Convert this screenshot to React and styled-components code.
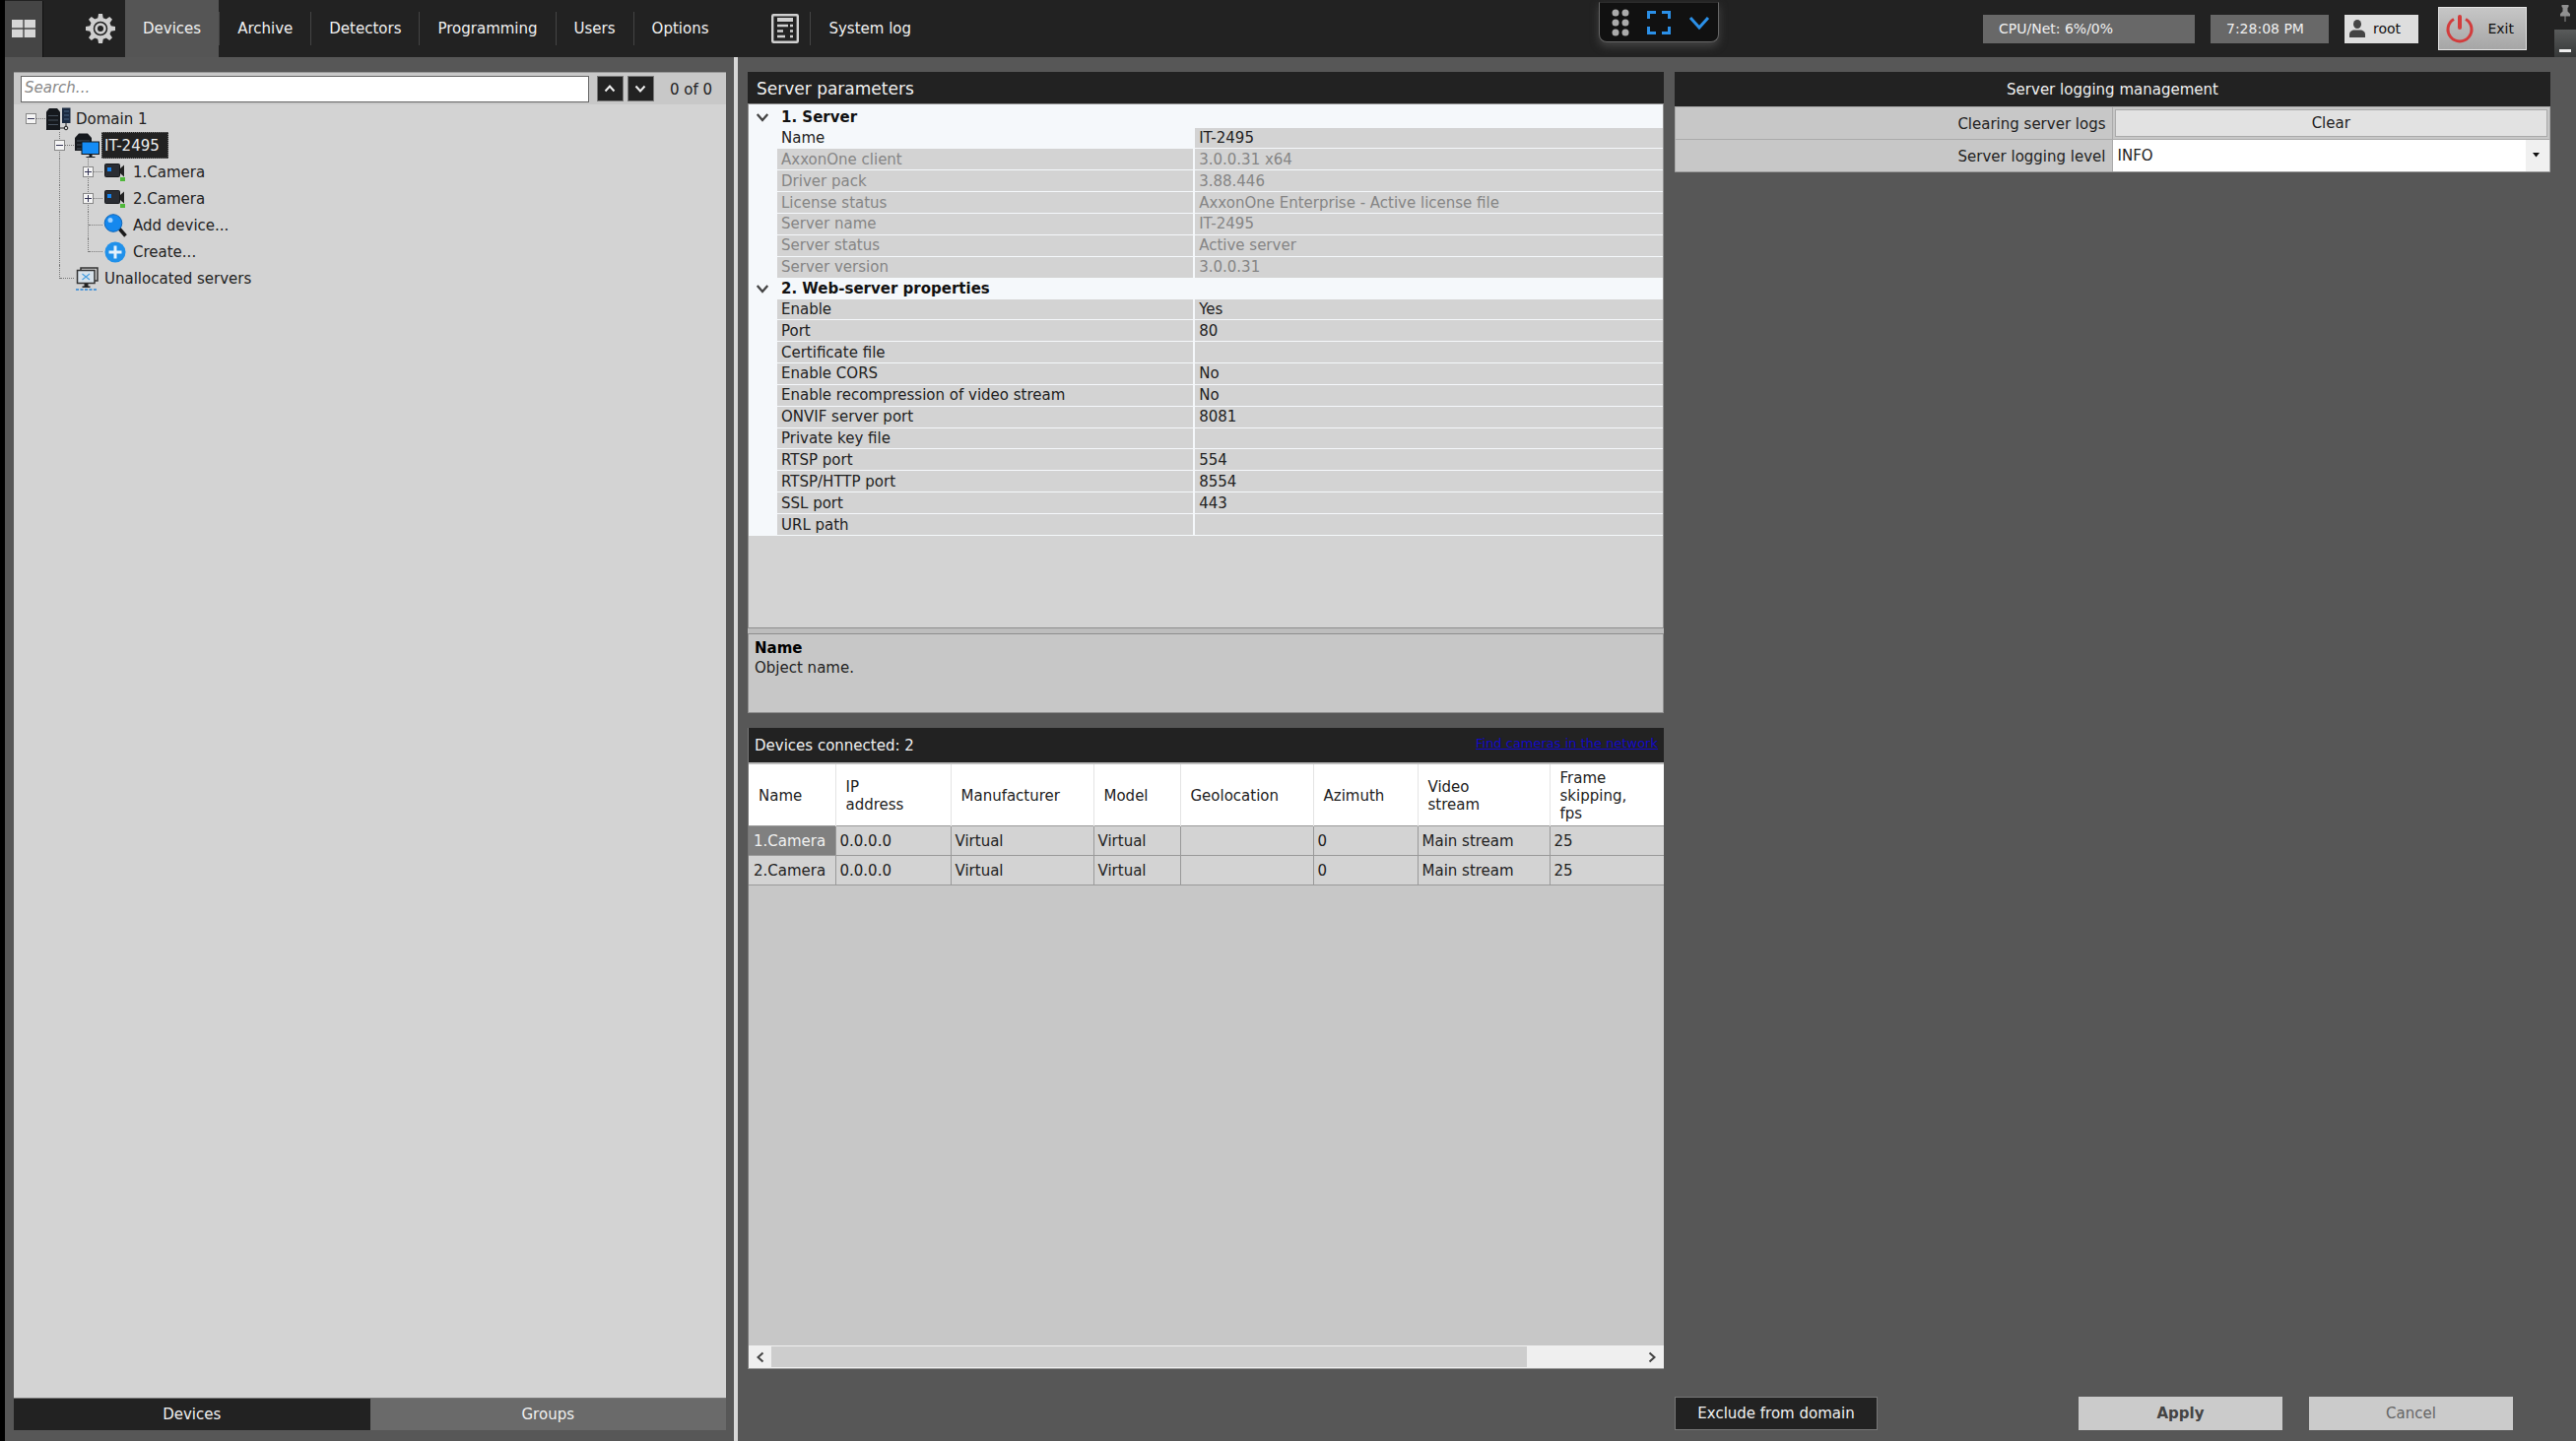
// dependences
import { useState } from 'react';

// styles
import styled, { createGlobalStyle, css } from 'styled-components';

const GlobalStyle = createGlobalStyle`
    *, *::before, *::after {
        box-sizing: border-box;
    }

    body {
        margin: 0;
        background: #575757;
        color: #222;
        font: 15px/18px "DejaVu Sans", Verdana, sans-serif;
    }

    button, input, select {
        margin: 0;
        padding: 0;
        border: 0;
        border-radius: 0;
        color: inherit;
        font: inherit;
    }
`;

const Page = styled.div`
    display: flex;
    flex-direction: column;
    min-height: 100vh;
    border-left: 5px solid #000;
`;

/* ---------- top bar ---------- */

const TopBar = styled.header`
    position: relative;
    display: flex;
    align-items: center;
    height: 58px;
    background: #222;
    color: #f0f0f0;
`;
const HomeButton = styled.button`
    display: flex;
    align-items: center;
    justify-content: center;
    width: 39px;
    height: 57px;
    margin-right: 43px;
    background: #454545;
    border-right: 1px solid #111;
`;
const Nav = styled.nav`
    display: flex;
    align-items: center;
    height: 100%;
    margin-left: 10px;
`;
const NavButton = styled.button`
    height: 58px;
    padding: 0 18px;
    background: ${({ $active }) => ($active ? '#555' : 'none')};
`;
const NavLine = styled.span`
    width: 1px;
    height: 34px;
    background: #444;
`;
const LogGroup = styled.div`
    display: flex;
    align-items: center;
    gap: 11px;
    margin-left: 46px;
`;
const Dock = styled.div`
    position: absolute;
    top: 2px;
    left: 62%;
    display: flex;
    align-items: center;
    justify-content: space-between;
    width: 122px;
    height: 41px;
    padding: 0 7px 0 12px;
    background: #111;
    border: 1px solid #666;
    border-top-color: #2c2c2c;
    border-radius: 0 0 8px 8px;
    box-shadow: 0 4px 8px #444;
`;
const DockButton = styled.button`
    display: flex;
    background: none;
`;
const Status = styled.div`
    display: flex;
    align-items: center;
    height: 100%;
    margin-left: auto;
    gap: 16px;
    font-size: 14px;
`;
const StatusBox = styled.span`
    width: ${({ $wide }) => ($wide ? '215px' : '120px')};
    height: 29px;
    padding: 5px 16px;
    background: #686868;
    white-space: nowrap;
`;
const UserButton = styled.button`
    display: flex;
    align-items: center;
    gap: 8px;
    width: 75px;
    height: 29px;
    padding: 0 5px;
    background: #dedede;
    color: #111;
`;
const ExitButton = styled.button`
    display: flex;
    align-items: center;
    justify-content: space-between;
    width: 90px;
    height: 44px;
    margin-left: 4px;
    padding: 0 12px 0 6px;
    background: linear-gradient(#c6c6c6, #a6a6a6);
    border: 1px solid #e4e4e4;
    color: #111;
`;
const WindowTools = styled.div`
    display: flex;
    flex-direction: column;
    justify-content: space-between;
    align-items: flex-end;
    width: 34px;
    height: 100%;
`;
const PinButton = styled.button`
    display: flex;
    justify-content: center;
    width: 22px;
    padding-top: 5px;
    background: none;
`;
const MinimizeButton = styled.button`
    display: flex;
    align-items: flex-end;
    justify-content: center;
    width: 22px;
    height: 28px;
    padding-bottom: 5px;
    background: linear-gradient(#595b5b, #363838);
`;

/* ---------- body ---------- */

const Body = styled.div`
    flex: 1;
    display: grid;
    grid-template-columns: 740fr 4px 1866fr;
`;
const Side = styled.aside`
    display: flex;
    flex-direction: column;
    padding: 15px 8px 11px 9px;
`;
const Splitter = styled.div`
    background: #d8d8d8;
`;
const Main = styled.main`
    display: grid;
    grid-template-columns: 930fr 889fr;
    column-gap: 11px;
    padding: 15px 26px 11px 10px;
`;

/* ---------- tree ---------- */

const SearchRow = styled.form`
    display: flex;
    align-items: center;
    gap: 4px;
    height: 33px;
    padding: 0 14px 0 7px;
    background: #c8c8c8;
    border-top: 1px solid #999;
`;
const SearchInput = styled.input`
    flex: 1;
    height: 27px;
    margin-right: 4px;
    padding: 0 3px 3px;
    background: #fff;
    border: 1px solid #666;

    &::placeholder {
        color: #8a8a8a;
        font-style: italic;
        opacity: 1;
    }
`;
const ArrowButton = styled.button`
    display: flex;
    align-items: center;
    justify-content: center;
    width: 27px;
    height: 26px;
    background: #222;
    border: 1px solid #777;
`;
const SearchCount = styled.output`
    margin-left: 12px;
    padding-top: 2px;
`;
const Tree = styled.ul`
    flex: 1;
    margin: 0;
    padding: 1px 0 0 3px;
    background: #d3d3d3;
    list-style: none;
`;
const TreeRow = styled.li`
    display: flex;
    align-items: center;
    height: 27px;
`;
const Guide = styled.span`
    position: relative;
    display: flex;
    align-items: center;
    justify-content: center;
    width: 29px;
    height: 27px;

    ${({ $up, $down }) => ($up || $down) && css`
        &::before {
            content: '';
            position: absolute;
            top: ${$up ? 0 : '50%'};
            bottom: ${$down ? 0 : '50%'};
            left: 14px;
            border-left: 1px dotted #777;
        }
    `}

    ${({ $right }) => $right && css`
        &::after {
            content: '';
            position: absolute;
            top: 13px;
            left: 15px;
            right: 0;
            border-top: 1px dotted #777;
        }
    `}
`;
const Expander = styled.button`
    position: relative;
    z-index: 1;
    display: flex;
    align-items: center;
    justify-content: center;
    width: 11px;
    height: 11px;
    background: #f4f4f4;
    border: 1px solid #888;
`;
const TreeIcon = styled.span`
    display: flex;
    justify-content: center;
    width: 28px;
    padding-right: 2px;
`;
const TreeLabel = styled.span`
    padding: 5px 3px 4px;
    color: #222;

    ${({ $selected }) => $selected && css`
        padding-right: 9px;
        background: #222;
        color: #eee;
        outline: 1px dotted #777;
        outline-offset: -1px;
    `}
`;
const SideTabs = styled.div`
    display: grid;
    grid-template-columns: 1fr 1fr;
    border-top: 1px solid #777;
`;
const SideTab = styled.button`
    height: 32px;
    background: ${({ $active }) => ($active ? '#222' : '#6a6a6a')};
    color: #f0f0f0;
`;

/* ---------- middle column ---------- */

const Column = styled.div`
    display: flex;
    flex-direction: column;
`;
const PanelTitle = styled.h2`
    display: flex;
    align-items: center;
    justify-content: ${({ $center }) => ($center ? 'center' : 'space-between')};
    height: ${({ $small }) => ($small ? '32px' : '35px')};
    margin: 0;
    padding: ${({ $small }) => ($small ? '2px 9px 0' : '0 6px')};
    background: #222;
    color: #f0f0f0;
    font-size: ${({ $small }) => ($small ? '17px' : '15px')};
    font-weight: normal;
`;
const PropertyBox = styled.section`
    height: 533px;
    background: #d3d3d3;
    border: 1px solid #8e8e8e;
`;
const PropertyTable = styled.table`
    width: 100%;
    height: 435px;
    margin-top: 3px;
    border-collapse: collapse;
    background: #f5f8fb;
    box-shadow: 0 -3px #f5f8fb;
    table-layout: fixed;

    th, td {
        padding: 0 4px;
        text-align: left;
        font-weight: normal;
        line-height: 18px;
    }
`;
const GroupRow = styled.tr`
    & th:last-child {
        color: #111;
        font-weight: bold;
    }
`;
const Toggle = styled.button`
    display: flex;
    padding: 0 3px;
    background: none;
`;
const PropertyRow = styled.tr`
    color: ${({ $muted }) => ($muted ? '#858585' : '#222')};

    & th, & td:last-child {
        background: #d3d3d3;
        border-bottom: 1px solid #f5f8fb;
    }

    & th {
        background: ${({ $selected }) => ($selected ? '#f5f8fb' : '#d3d3d3')};
        border-right: 2px solid #f5f8fb;
    }
`;
const Help = styled.section`
    height: 81px;
    margin-top: 5px;
    padding: 5px 6px;
    background: #c7c7c7;
    border: 1px solid #8e8e8e;
    outline: 5px solid #bdbdbd;
    clip-path: inset(-5px 0 0 0);

    h3 {
        margin: 0 0 2px;
        color: #000;
        font-size: 15px;
    }

    p {
        margin: 0;
    }
`;
const DeviceBox = styled.section`
    flex: 1;
    display: flex;
    flex-direction: column;
    margin: 15px 0 62px;
    background: #c7c7c7;
    border-left: 1px solid #777;
    border-bottom: 1px solid #999;
`;
const FindLink = styled.a`
    padding-bottom: 4px;
    color: #1208c8;
    font-size: 13px;
`;
const DeviceTable = styled.table`
    width: 100%;
    border-top: 2px solid #bbb;
    border-collapse: collapse;
    table-layout: fixed;

    th {
        height: 63px;
        padding: 2px 30px 0 10px;
        background: #fff;
        border-right: 1px solid #e4e4e4;
        font-weight: normal;
        text-align: left;
    }

    td {
        height: 30px;
        padding: 1px 4px 0;
        background: #d3d3d3;
        border: 1px solid #999;
        white-space: nowrap;
    }

    th:last-child, td:last-child {
        border-right: 0;
    }

    td:first-child {
        padding-left: 5px;
        border-left: 0;
    }
`;
const DeviceRow = styled.tr`
    & td:first-child {
        background: ${({ $selected }) => ($selected ? '#808080' : '#d3d3d3')};
        color: ${({ $selected }) => ($selected ? '#f0f0f0' : '#222')};
    }
`;
const ScrollBar = styled.div`
    display: grid;
    grid-template-columns: 23px 766fr 116fr 23px;
    height: 23px;
    margin-top: auto;
    padding: 1px 0;
    background: #efefef;
`;
const ScrollThumb = styled.span`
    background: #cdcdcd;
`;
const ScrollButton = styled.button`
    grid-column: ${({ $end }) => ($end ? 4 : 1)};
    display: flex;
    align-items: center;
    justify-content: center;
    background: none;
`;

/* ---------- right column ---------- */

const LogForm = styled.section`
    background: #c7c7c7;
    border-bottom: 1px solid #999;
`;
const LogRow = styled.div`
    display: grid;
    grid-template-columns: 1fr 1fr;
    height: 33px;
    border: 1px solid #aaa;
    border-bottom: 0;
`;
const LogLabel = styled.label`
    padding: 8px 6px 0;
    border-right: 1px solid #aaa;
    text-align: right;
`;
const ClearButton = styled.button`
    margin: 2px;
    background: #e2e2e2;
    border: 1px solid #aaa;
`;
const SelectWrap = styled.div`
    position: relative;
    display: grid;

    svg {
        position: absolute;
        top: 13px;
        right: 10px;
        pointer-events: none;
    }
`;
const LevelSelect = styled.select`
    padding: 0 5px;
    appearance: none;
    background: linear-gradient(#f0f0f0, #f0f0f0) right / 24px 100% no-repeat #fff;
`;
const Footer = styled.footer`
    display: flex;
    gap: 27px;
    margin-top: auto;
    padding-right: 38px;
`;
const ExcludeButton = styled.button`
    width: 206px;
    height: 34px;
    margin-right: auto;
    background: #222;
    border: 1px solid #777;
    color: #f0f0f0;
`;
const ActionButton = styled.button`
    width: 207px;
    height: 34px;
    background: #cbcbcb;
    color: ${({ $primary }) => ($primary ? '#444' : '#666')};
    font-weight: ${({ $primary }) => ($primary ? 'bold' : 'normal')};
`;

/* ---------- icons ---------- */

const IconGear = () => <svg width="30" height="30" viewBox="-15 -15 30 30" aria-hidden="true">
    {[0, 45, 90, 135, 180, 225, 270, 315].map((angle) => (
        <path key={angle} d="M-3-9-2-15H2L3-9Z" fill="#cfcfcf" transform={`rotate(${angle})`} />
    ))}
    <circle r="11" fill="#cfcfcf" />
    <circle r="6.500" fill="none" stroke="#222" strokeWidth="1.500" />
    <circle r="3" fill="#222" />
</svg>;

const IconWindows = () => <svg width="24" height="18" viewBox="0 0 24 18" aria-hidden="true">
    <path d="M0 0h11.300v8.300H0zM12.700 0H24v8.300H12.700zM0 9.700h11.300V18H0zM12.700 9.700H24V18H12.700z" fill="#d6d6d6" />
</svg>;

const IconLog = () => <svg width="28" height="30" viewBox="0 0 28 30" aria-hidden="true">
    <rect x="1.200" y="1.200" width="25.600" height="27.600" rx="1" fill="none" stroke="#d0d0d0" strokeWidth="2.400" />
    <path d="M6 12h11M19 12h3M6 17.500h6M19 17.500h3M6 23h8M19 23h3" stroke="#d0d0d0" strokeWidth="2.500" />
    <path d="M6 6h16" stroke="#d0d0d0" strokeWidth="4" />
</svg>;

const IconDots = () => <svg width="18" height="28" viewBox="0 0 18 28" aria-hidden="true">
    {[4, 14, 24].map((y) => <g key={y} fill="#aaa">
        <circle cx="4" cy={y} r="3.500" />
        <circle cx="14" cy={y} r="3.500" />
    </g>)}
</svg>;

const IconFull = () => <svg width="24" height="24" viewBox="0 0 24 24" aria-hidden="true">
    <path d="M1.500 8V1.500H9M15 1.500h7.500V8M22.500 16v6.500H15M9 22.500H1.500V16" fill="none" stroke="#2b90e8" strokeWidth="3" />
</svg>;

const Chevron = ({ turn = 0, size = 12, color = '#444', width = 2 }) => (
    <svg width={size} height={size} viewBox="0 0 12 12" aria-hidden="true">
        <path d="M1.500 3.500 6 8.500l4.500-5" fill="none" stroke={color} strokeWidth={width} transform={`rotate(${turn} 6 6)`} />
    </svg>
);

const IconUser = () => <svg width="16" height="18" viewBox="0 0 16 18" aria-hidden="true">
    <ellipse cx="8" cy="4.500" rx="4" ry="4.500" fill="#444" />
    <path d="M0 18v-3c0-3 2.500-4.500 5-4.500h6c2.500 0 5 1.500 5 4.500v3z" fill="#444" />
</svg>;

const IconPower = () => <svg width="30" height="30" viewBox="0 0 30 30" aria-hidden="true">
    <path d="M9 5.500a12 12 0 1 0 12 0" fill="none" stroke="#d23c3c" strokeWidth="3" />
    <path d="M15 3v11" stroke="#d23c3c" strokeWidth="4" strokeLinecap="round" />
</svg>;

const IconPin = () => <svg width="10" height="17" viewBox="0 0 10 17" aria-hidden="true">
    <path d="M1.500 0h7v2L7.500 3v3.500L10 9v2.500H0V9l2.500-2.500V3l-1-1zM4.500 11.500h1V17h-1z" fill="#909090" />
</svg>;

const IconDomain = () => <svg width="25" height="24" viewBox="0 0 25 24" aria-hidden="true">
    <path d="M0 4.500 3 1h8l3 3.500V23H0z" fill="#15181d" />
    <path d="M2 8.500h10M2 13h10M2 17.500h10" stroke="#46505c" strokeWidth="1" />
    <path d="M16 .500h8.500V16H16z" fill="#1b2a40" />
    <path d="M18 4h5M18 8h5M18 12h5" stroke="#4b6482" strokeWidth="1" />
    <path d="M20 16v4M14 21h5" stroke="#222" strokeWidth="1" />
    <circle cx="20" cy="21" r="1.800" fill="none" stroke="#222" />
</svg>;

const IconServer = () => <svg width="25" height="25" viewBox="0 0 25 25" aria-hidden="true">
    <path d="M0 5 4 .500h9L17 5v13H0z" fill="#15181d" />
    <path d="M2 8h13M2 12h5M2 16h5" stroke="#46505c" strokeWidth="1" />
    <rect x="7" y="9" width="17.500" height="12.500" fill="#158cf5" stroke="#15181d" />
    <path d="M14.500 22h3v2h3v1h-9v-1h3z" fill="#15181d" />
</svg>;

const IconCamera = () => <svg width="22" height="18" viewBox="0 0 22 18" aria-hidden="true">
    <rect x=".500" y=".500" width="15" height="13" rx="1" fill="#2a2d33" stroke="#17191c" />
    <rect x="3" y="4" width="4" height="4" fill="#1583f0" />
    <path d="M16 5l4-3.500v12L16 10z" fill="#222" />
    <rect x="16" y="14" width="5" height="4" fill="#4fb83a" />
</svg>;

const IconSearch = () => <svg width="25" height="24" viewBox="0 0 25 24" aria-hidden="true">
    <path d="m16 15 6.500 7.500" stroke="#1c1c1c" strokeWidth="3.500" />
    <circle cx="10" cy="9.500" r="8.800" fill="#1588ee" stroke="#0c64b8" />
    <circle cx="7" cy="6.500" r="2.500" fill="#9fd2ff" />
</svg>;

const IconCreate = () => <svg width="22" height="22" viewBox="0 0 22 22" aria-hidden="true">
    <circle cx="11" cy="11" r="10.500" fill="#2191ea" />
    <path d="M11 4.500v13M4.500 11h13" stroke="#e4f1fc" strokeWidth="3" />
</svg>;

const IconUnallocated = () => <svg width="23" height="24" viewBox="0 0 23 24" aria-hidden="true">
    <path d="M5 4V1h17v13h-3" fill="none" stroke="#333" strokeWidth="1.500" />
    <rect x="1.500" y="3.500" width="17.500" height="13" fill="#d8e2ea" stroke="#333" strokeWidth="1.500" />
    <path d="m6.500 7 7.500 6M14 7l-7.500 6" stroke="#4aa0e0" strokeWidth="1.200" />
    <path d="M8.500 17h4v2.500h2v1.500h-8v-1.500h2z" fill="#222" />
    <path d="M0 23h22" stroke="#2b86d8" strokeWidth="1.500" strokeDasharray="3 1.500" />
</svg>;

/* ---------- data ---------- */

const sections = ['Devices', 'Archive', 'Detectors', 'Programming', 'Users', 'Options'];

// guides: one entry per level, v = vertical line, t = tee, l = last, +/- = expander
const treeRows = [
    { label: 'Domain 1', guides: ['-'], Icon: IconDomain },
    { label: 'IT-2495', guides: ['', '-v'], Icon: IconServer },
    { label: '1.Camera', guides: ['', 'v', '+v'], Icon: IconCamera },
    { label: '2.Camera', guides: ['', 'v', '+v'], Icon: IconCamera },
    { label: 'Add device...', guides: ['', 'v', 't'], Icon: IconSearch },
    { label: 'Create...', guides: ['', 'v', 'l'], Icon: IconCreate },
    { label: 'Unallocated servers', guides: ['', 'l'], Icon: IconUnallocated },
];

const propertyGroups = [
    {
        title: '1. Server',
        rows: [
            ['Name', 'IT-2495'],
            ['AxxonOne client', '3.0.0.31 x64', true],
            ['Driver pack', '3.88.446', true],
            ['License status', 'AxxonOne Enterprise - Active license file', true],
            ['Server name', 'IT-2495', true],
            ['Server status', 'Active server', true],
            ['Server version', '3.0.0.31', true],
        ],
    },
    {
        title: '2. Web-server properties',
        rows: [
            ['Enable', 'Yes'],
            ['Port', '80'],
            ['Certificate file', ''],
            ['Enable CORS', 'No'],
            ['Enable recompression of video stream', 'No'],
            ['ONVIF server port', '8081'],
            ['Private key file', ''],
            ['RTSP port', '554'],
            ['RTSP/HTTP port', '8554'],
            ['SSL port', '443'],
            ['URL path', ''],
        ],
    },
];

const deviceColumns = [
    ['Name', 88],
    ['IP address', 117],
    ['Manufacturer', 145],
    ['Model', 88],
    ['Geolocation', 135],
    ['Azimuth', 106],
    ['Video stream', 134],
    ['Frame skipping, fps'],
];
const devices = [
    ['1.Camera', '0.0.0.0', 'Virtual', 'Virtual', '', '0', 'Main stream', '25'],
    ['2.Camera', '0.0.0.0', 'Virtual', 'Virtual', '', '0', 'Main stream', '25'],
];

/* ---------- parts ---------- */

function TreeGuide({ kind, label }) {
    const box = kind[0] === '+' || kind[0] === '-';

    return <Guide
        $up={/[vtl]/.test(kind)}
        $down={/[vt]/.test(kind)}
        $right={box || kind === 't' || kind === 'l'}
    >
        {box && <Expander type="button" aria-label={`Toggle ${label}`}>
            <svg width="7" height="7" viewBox="0 0 7 7" aria-hidden="true">
                <path d={kind[0] === '+' ? 'M0 3.500h7M3.500 0v7' : 'M0 3.500h7'} stroke="#335" />
            </svg>
        </Expander>}
    </Guide>
}

function Properties() {
    return <PropertyBox>
        <PropertyTable>
            <colgroup>
                <col style={{ width: 29 }} />
                <col style={{ width: '45.600%' }} />
                <col />
            </colgroup>
            {propertyGroups.map(({ title, rows }) => <tbody key={title}>
                <GroupRow>
                    <td><Toggle type="button" aria-label={title}><Chevron size={14} /></Toggle></td>
                    <th colSpan={2}>{title}</th>
                </GroupRow>
                {rows.map(([name, value, muted]) => (
                    <PropertyRow key={name} $muted={muted} $selected={name === 'Name'}>
                        <td />
                        <th scope="row">{name}</th>
                        <td>{value}</td>
                    </PropertyRow>
                ))}
            </tbody>)}
        </PropertyTable>
    </PropertyBox>
}

function Devices() {
    return <DeviceBox>
        <PanelTitle>
            Devices connected: 2
            <FindLink href="#find">Find cameras in the network</FindLink>
        </PanelTitle>
        <DeviceTable>
            <colgroup>
                {deviceColumns.map(([name, width]) => <col key={name} style={{ width }} />)}
            </colgroup>
            <thead>
                <tr>{deviceColumns.map(([name]) => <th key={name} scope="col">{name}</th>)}</tr>
            </thead>
            <tbody>
                {devices.map((cells, row) => <DeviceRow key={cells[0]} $selected={row === 0}>
                    {cells.map((cell, i) => <td key={i}>{cell}</td>)}
                </DeviceRow>)}
            </tbody>
        </DeviceTable>
        <ScrollBar>
            <ScrollButton type="button" aria-label="Scroll left"><Chevron turn={90} /></ScrollButton>
            <ScrollThumb />
            <ScrollButton type="button" $end aria-label="Scroll right"><Chevron turn={-90} /></ScrollButton>
        </ScrollBar>
    </DeviceBox>
}

export default function App() {
    const [section, setSection] = useState('Devices');
    const [sideTab, setSideTab] = useState('Devices');

    return <>
        <GlobalStyle />

        <Page>
            <TopBar>
                <HomeButton aria-label="Layouts"><IconWindows /></HomeButton>
                <IconGear />
                <Nav>
                    {sections.map((name, i) => [
                        i > 0 && <NavLine key={`${name}-line`} />,
                        <NavButton key={name} $active={name === section} onClick={() => setSection(name)}>
                            {name}
                        </NavButton>,
                    ])}
                </Nav>
                <LogGroup>
                    <IconLog />
                    <NavLine />
                </LogGroup>
                <NavButton>System log</NavButton>

                <Dock>
                    <IconDots />
                    <DockButton aria-label="Full screen"><IconFull /></DockButton>
                    <DockButton aria-label="More"><Chevron size={24} color="#2b90e8" width={1.5} /></DockButton>
                </Dock>

                <Status>
                    <StatusBox $wide>CPU/Net: 6%/0%</StatusBox>
                    <StatusBox>7:28:08 PM</StatusBox>
                    <UserButton><IconUser />root</UserButton>
                    <ExitButton><IconPower />Exit</ExitButton>
                    <WindowTools>
                        <PinButton aria-label="Pin"><IconPin /></PinButton>
                        <MinimizeButton aria-label="Minimize">
                            <svg width="12" height="3" aria-hidden="true"><rect width="12" height="3" fill="#eee" /></svg>
                        </MinimizeButton>
                    </WindowTools>
                </Status>
            </TopBar>

            <Body>
                <Side>
                    <SearchRow>
                        <SearchInput type="text" placeholder="Search..." aria-label="Search" />
                        <ArrowButton type="button" aria-label="Previous"><Chevron turn={180} color="#eee" /></ArrowButton>
                        <ArrowButton type="button" aria-label="Next"><Chevron color="#eee" /></ArrowButton>
                        <SearchCount>0 of 0</SearchCount>
                    </SearchRow>
                    <Tree>
                        {treeRows.map(({ label, guides, Icon }) => <TreeRow key={label}>
                            {guides.map((kind, i) => <TreeGuide key={i} kind={kind} label={label} />)}
                            <TreeIcon><Icon /></TreeIcon>
                            <TreeLabel $selected={label === 'IT-2495'}>{label}</TreeLabel>
                        </TreeRow>)}
                    </Tree>
                    <SideTabs>
                        {['Devices', 'Groups'].map((name) => (
                            <SideTab key={name} $active={name === sideTab} onClick={() => setSideTab(name)}>
                                {name}
                            </SideTab>
                        ))}
                    </SideTabs>
                </Side>

                <Splitter />

                <Main>
                    <Column>
                        <PanelTitle $small>Server parameters</PanelTitle>
                        <Properties />
                        <Help>
                            <h3>Name</h3>
                            <p>Object name.</p>
                        </Help>
                        <Devices />
                    </Column>

                    <Column>
                        <PanelTitle $center>Server logging management</PanelTitle>
                        <LogForm>
                            <LogRow>
                                <LogLabel htmlFor="clear-logs">Clearing server logs</LogLabel>
                                <ClearButton id="clear-logs">Clear</ClearButton>
                            </LogRow>
                            <LogRow>
                                <LogLabel htmlFor="log-level">Server logging level</LogLabel>
                                <SelectWrap>
                                    <LevelSelect id="log-level" defaultValue="INFO">
                                        <option>INFO</option>
                                        <option>DEBUG</option>
                                        <option>ERROR</option>
                                    </LevelSelect>
                                    <svg width="7" height="5" aria-hidden="true"><path d="M0 0h7L3.500 4.500z" fill="#111" /></svg>
                                </SelectWrap>
                            </LogRow>
                        </LogForm>
                        <Footer>
                            <ExcludeButton>Exclude from domain</ExcludeButton>
                            <ActionButton $primary>Apply</ActionButton>
                            <ActionButton>Cancel</ActionButton>
                        </Footer>
                    </Column>
                </Main>
            </Body>
        </Page>
    </>
}
